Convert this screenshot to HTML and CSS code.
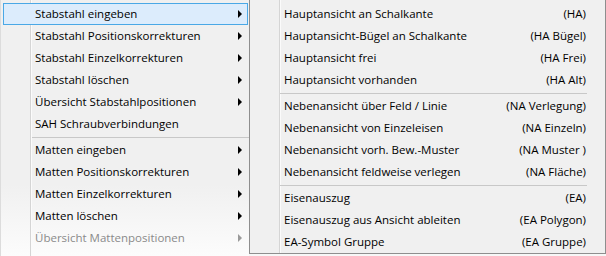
FILE: index.html
```html
<!DOCTYPE html>
<html lang="de">
<head>
<meta charset="utf-8">
<link rel="stylesheet" href="styles.css">
</head>
<body>
<div class="screen">
  <div class="menu main">
    <div class="item hot"><span class="label">Stabstahl eingeben</span><span class="arrow"></span></div>
    <div class="item"><span class="label">Stabstahl Positionskorrekturen</span><span class="arrow"></span></div>
    <div class="item"><span class="label">Stabstahl Einzelkorrekturen</span><span class="arrow"></span></div>
    <div class="item"><span class="label">Stabstahl löschen</span><span class="arrow"></span></div>
    <div class="item"><span class="label">Übersicht Stabstahlpositionen</span><span class="arrow"></span></div>
    <div class="item"><span class="label">SAH Schraubverbindungen</span></div>
    <div class="sep"></div>
    <div class="item"><span class="label">Matten eingeben</span><span class="arrow"></span></div>
    <div class="item"><span class="label">Matten Positionskorrekturen</span><span class="arrow"></span></div>
    <div class="item"><span class="label">Matten Einzelkorrekturen</span><span class="arrow"></span></div>
    <div class="item"><span class="label">Matten löschen</span><span class="arrow"></span></div>
    <div class="item disabled"><span class="label">Übersicht Mattenpositionen</span><span class="arrow"></span></div>
  </div>
  <div class="menu sub">
    <div class="item"><span class="label">Hauptansicht an Schalkante</span><span class="key">(HA)</span></div>
    <div class="item"><span class="label">Hauptansicht-Bügel an Schalkante</span><span class="key">(HA Bügel)</span></div>
    <div class="item"><span class="label">Hauptansicht frei</span><span class="key">(HA Frei)</span></div>
    <div class="item"><span class="label">Hauptansicht vorhanden</span><span class="key">(HA Alt)</span></div>
    <div class="sep"></div>
    <div class="item"><span class="label">Nebenansicht über Feld / Linie</span><span class="key">(NA Verlegung)</span></div>
    <div class="item"><span class="label">Nebenansicht von Einzeleisen</span><span class="key">(NA Einzeln)</span></div>
    <div class="item"><span class="label">Nebenansicht vorh. Bew.-Muster</span><span class="key">(NA Muster )</span></div>
    <div class="item"><span class="label">Nebenansicht feldweise verlegen</span><span class="key">(NA Fläche)</span></div>
    <div class="sep"></div>
    <div class="item"><span class="label">Eisenauszug</span><span class="key">(EA)</span></div>
    <div class="item"><span class="label">Eisenauszug aus Ansicht ableiten</span><span class="key">(EA Polygon)</span></div>
    <div class="item"><span class="label">EA-Symbol Gruppe</span><span class="key">(EA Gruppe)</span></div>
  </div>
</div>
</body>
</html>
```
FILE: styles.css
```css
html, body {
  margin: 0;
  padding: 0;
}
body {
  background: #f7f7f7;
  font-family: "Open Sans", "Noto Sans", sans-serif;
  font-size: 11.5px;
  color: #000;
  width: 606px;
  height: 256px;
  overflow: hidden;
}
.screen {
  display: flex;
  align-items: flex-start;
}
.menu {
  box-sizing: border-box;
  padding-top: 3px;
}
.main {
  width: 249px;
  height: 256px;
  border-left: 1px solid #dcdcdc;
  background:
    linear-gradient(to right, transparent 29px, #d5d5d5 29px, #d5d5d5 30px, #fbfbfb 30px, #fbfbfb 31px, transparent 31px),
    linear-gradient(to bottom, #f0f0f0 0, #f0f0f0 185px, #fcfcfc 256px);
}
.sub {
  width: 357px;
  height: 254px;
  border: 1px solid #8e8e8e;
  border-top: none;
  background:
    linear-gradient(to right, transparent 29px, #d5d5d5 29px, #d5d5d5 30px, #fbfbfb 30px, #fbfbfb 31px, transparent 31px),
    #f0f0f0;
}
.item {
  box-sizing: border-box;
  height: 22px;
  line-height: 20px;
  border: 1px solid transparent;
  display: flex;
  align-items: center;
  white-space: nowrap;
}
.main .item {
  margin-left: 2px;
  width: 245px;
  padding-left: 31px;
  padding-right: 5px;
}
.sub .item {
  padding-left: 33px;
  padding-right: 18px;
}
.label {
  flex: 1;
}
.item.hot {
  background: #dcecfc;
  border-color: #4aa8e6;
}
.item.disabled {
  color: #8a8a8a;
}
.arrow {
  width: 0;
  height: 0;
  border-left: 4px solid #000;
  border-top: 4px solid transparent;
  border-bottom: 4px solid transparent;
}
.disabled .arrow {
  border-left-color: #9a9a9a;
}
.sep {
  height: 4px;
  box-sizing: border-box;
  border-top: 2px solid transparent;
  background: linear-gradient(to bottom, #c8c8c8 0, #c8c8c8 1px, transparent 1px);
  background-clip: padding-box;
}
.main .sep {
  margin-left: 31px;
}
.sub .sep {
  margin-left: 30px;
  margin-right: 18px;
}
```
